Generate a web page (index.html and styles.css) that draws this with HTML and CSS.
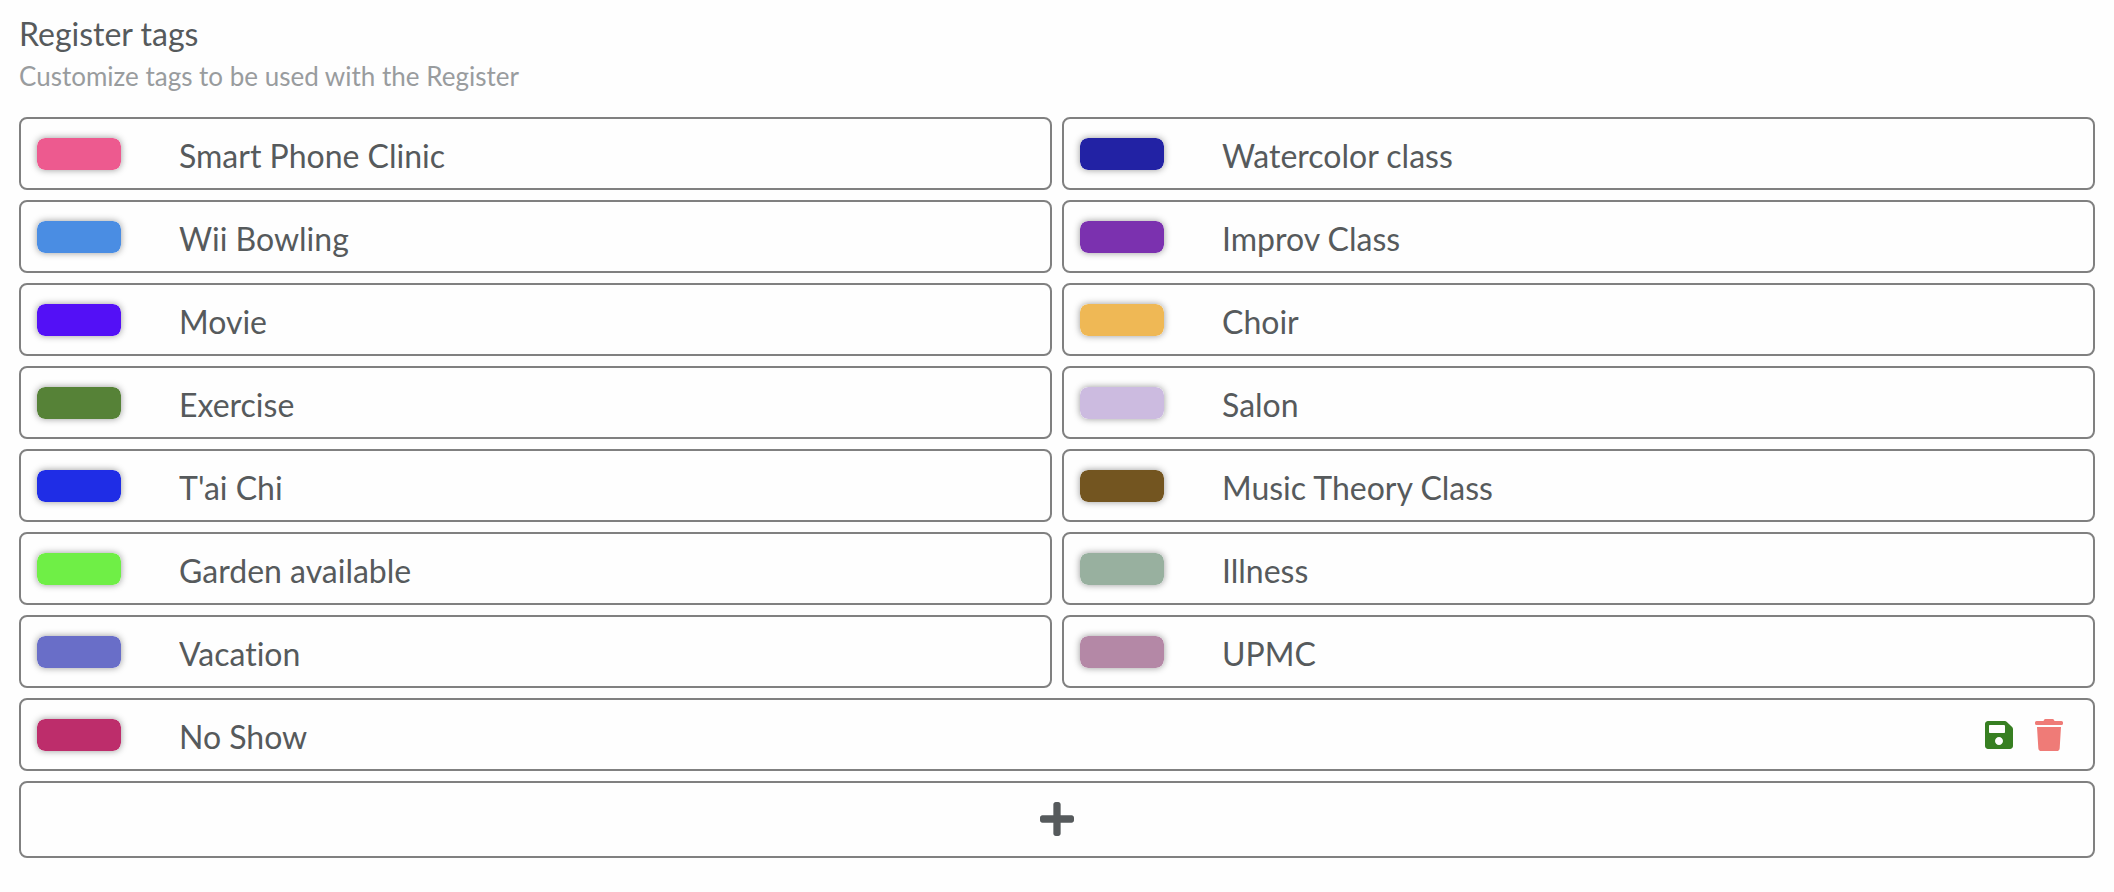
FILE: index.html
```html
<!DOCTYPE html>
<html lang="en">
<head>
  <meta charset="UTF-8">
  <meta name="viewport" content="width=device-width, initial-scale=1.0">
  <title>Register tags</title>
  <link rel="stylesheet" href="styles.css">
</head>
<body>
  <main class="tags-page">
    <h1>Register tags</h1>
    <p class="subtitle">Customize tags to be used with the Register</p>

    <div class="tag-grid">
      <div class="tag">
        <input type="color" class="swatch" value="#ed5a8f" aria-label="Smart Phone Clinic color">
        <input type="text" class="tag-name" value="Smart Phone Clinic" aria-label="Tag name">
      </div>
      <div class="tag">
        <input type="color" class="swatch" value="#2222a4" aria-label="Watercolor class color">
        <input type="text" class="tag-name" value="Watercolor class" aria-label="Tag name">
      </div>
      <div class="tag">
        <input type="color" class="swatch" value="#4a8de3" aria-label="Wii Bowling color">
        <input type="text" class="tag-name" value="Wii Bowling" aria-label="Tag name">
      </div>
      <div class="tag">
        <input type="color" class="swatch" value="#7b31af" aria-label="Improv Class color">
        <input type="text" class="tag-name" value="Improv Class" aria-label="Tag name">
      </div>
      <div class="tag">
        <input type="color" class="swatch" value="#5310f6" aria-label="Movie color">
        <input type="text" class="tag-name" value="Movie" aria-label="Tag name">
      </div>
      <div class="tag">
        <input type="color" class="swatch" value="#efb855" aria-label="Choir color">
        <input type="text" class="tag-name" value="Choir" aria-label="Tag name">
      </div>
      <div class="tag">
        <input type="color" class="swatch" value="#568237" aria-label="Exercise color">
        <input type="text" class="tag-name" value="Exercise" aria-label="Tag name">
      </div>
      <div class="tag">
        <input type="color" class="swatch" value="#ccbbe0" aria-label="Salon color">
        <input type="text" class="tag-name" value="Salon" aria-label="Tag name">
      </div>
      <div class="tag">
        <input type="color" class="swatch" value="#1f2de6" aria-label="T'ai Chi color">
        <input type="text" class="tag-name" value="T'ai Chi" aria-label="Tag name">
      </div>
      <div class="tag">
        <input type="color" class="swatch" value="#735520" aria-label="Music Theory Class color">
        <input type="text" class="tag-name" value="Music Theory Class" aria-label="Tag name">
      </div>
      <div class="tag">
        <input type="color" class="swatch" value="#6fef46" aria-label="Garden available color">
        <input type="text" class="tag-name" value="Garden available" aria-label="Tag name">
      </div>
      <div class="tag">
        <input type="color" class="swatch" value="#98b09f" aria-label="Illness color">
        <input type="text" class="tag-name" value="Illness" aria-label="Tag name">
      </div>
      <div class="tag">
        <input type="color" class="swatch" value="#696ec8" aria-label="Vacation color">
        <input type="text" class="tag-name" value="Vacation" aria-label="Tag name">
      </div>
      <div class="tag">
        <input type="color" class="swatch" value="#b488a6" aria-label="UPMC color">
        <input type="text" class="tag-name" value="UPMC" aria-label="Tag name">
      </div>
      <div class="tag wide">
        <input type="color" class="swatch" value="#bd2d6b" aria-label="No Show color">
        <input type="text" class="tag-name" value="No Show" aria-label="Tag name">
        <div class="actions">
          <button type="button" class="save" aria-label="Save">
            <svg viewBox="0 0 448 512" width="28" height="32"><path d="M433.941 129.941l-83.882-83.882A48 48 0 0 0 316.118 32H48C21.49 32 0 53.49 0 80v352c0 26.51 21.49 48 48 48h352c26.51 0 48-21.49 48-48V163.882a48 48 0 0 0-14.059-33.941zM224 416c-35.346 0-64-28.654-64-64 0-35.346 28.654-64 64-64s64 28.654 64 64c0 35.346-28.654 64-64 64zm96-304.52V212c0 6.627-5.373 12-12 12H76c-6.627 0-12-5.373-12-12V108c0-6.627 5.373-12 12-12h228.52c3.183 0 6.235 1.264 8.485 3.515l3.48 3.48A11.996 11.996 0 0 1 320 111.48z"/></svg>
          </button>
          <button type="button" class="delete" aria-label="Delete">
            <svg viewBox="0 0 448 512" width="28" height="32"><path d="M424 32H312l-9.400-18.700A24 24 0 0 0 281.100 0H166.800a23.720 23.720 0 0 0-21.400 13.300L136 32H24A24 24 0 0 0 0 56v16a24 24 0 0 0 24 24h400a24 24 0 0 0 24-24V56a24 24 0 0 0-24-24zM53.200 467a48 48 0 0 0 47.900 45h245.800a48 48 0 0 0 47.900-45L416 128H32z"/></svg>
          </button>
        </div>
      </div>
      <button type="button" class="add wide" aria-label="Add tag">
        <svg viewBox="0 32 448 448" width="34" height="34"><path d="M416 208H272V64c0-17.670-14.330-32-32-32h-32c-17.670 0-32 14.330-32 32v144H32c-17.670 0-32 14.330-32 32v32c0 17.670 14.330 32 32 32h144v144c0 17.670 14.330 32 32 32h32c17.670 0 32-14.330 32-32V304h144c17.670 0 32-14.330 32-32v-32c0-17.670-14.330-32-32-32z"/></svg>
      </button>
    </div>
  </main>
</body>
</html>
```
FILE: styles.css
```css
:root {
  --background: #fefefe;
  --text: #565a5c;
  --muted: #999c9e;
  --border: #808080;
}

* {
  box-sizing: border-box;
}

body {
  margin: 0;
  background: var(--background);
  color: var(--text);
  font-family: Lato, "Open Sans", sans-serif;
  font-variant-ligatures: none;
}

.tags-page {
  padding: 14px 19px;
}

h1 {
  margin: 0;
  font-size: 32px;
  font-weight: 400;
  line-height: 40px;
}

.subtitle {
  margin: 6px 0 24px;
  color: var(--muted);
  font-size: 26px;
  line-height: 33px;
}

.tag-grid {
  display: grid;
  grid-template-columns: 1fr 1fr;
  gap: 10px;
}

.tag,
.add {
  display: flex;
  align-items: center;
  background: var(--background);
  border: 2px solid var(--border);
  border-radius: 8px;
}

.tag {
  height: 73px;
  padding: 0 30px 0 16px;
}

.wide {
  grid-column: 1 / -1;
}

.swatch {
  appearance: none;
  flex: none;
  width: 84px;
  height: 32px;
  margin: 0;
  padding: 0;
  border: 0;
  border-radius: 8px;
  background: none;
  box-shadow: 0 0 7px rgba(0, 0, 0, 0.4);
  cursor: pointer;
}

.swatch::-webkit-color-swatch-wrapper {
  padding: 0;
}

.swatch::-webkit-color-swatch {
  border: 0;
  border-radius: 8px;
}

.tag-name {
  flex: 1;
  min-width: 0;
  margin-left: 58px;
  padding: 5px 0 0;
  border: 0;
  outline: 0;
  background: none;
  color: inherit;
  font: inherit;
  font-size: 32px;
  font-variant-ligatures: none;
  line-height: 40px;
}

.actions {
  display: flex;
  gap: 22px;
}

.actions button {
  display: flex;
  padding: 0;
  border: 0;
  background: none;
  cursor: pointer;
}

svg {
  display: block;
  fill: currentColor;
}

.save {
  color: #377f22;
}

.delete {
  color: #ef7b77;
}

.add {
  justify-content: center;
  height: 77px;
  padding: 0 0 2px;
  color: var(--text);
  cursor: pointer;
}
```
